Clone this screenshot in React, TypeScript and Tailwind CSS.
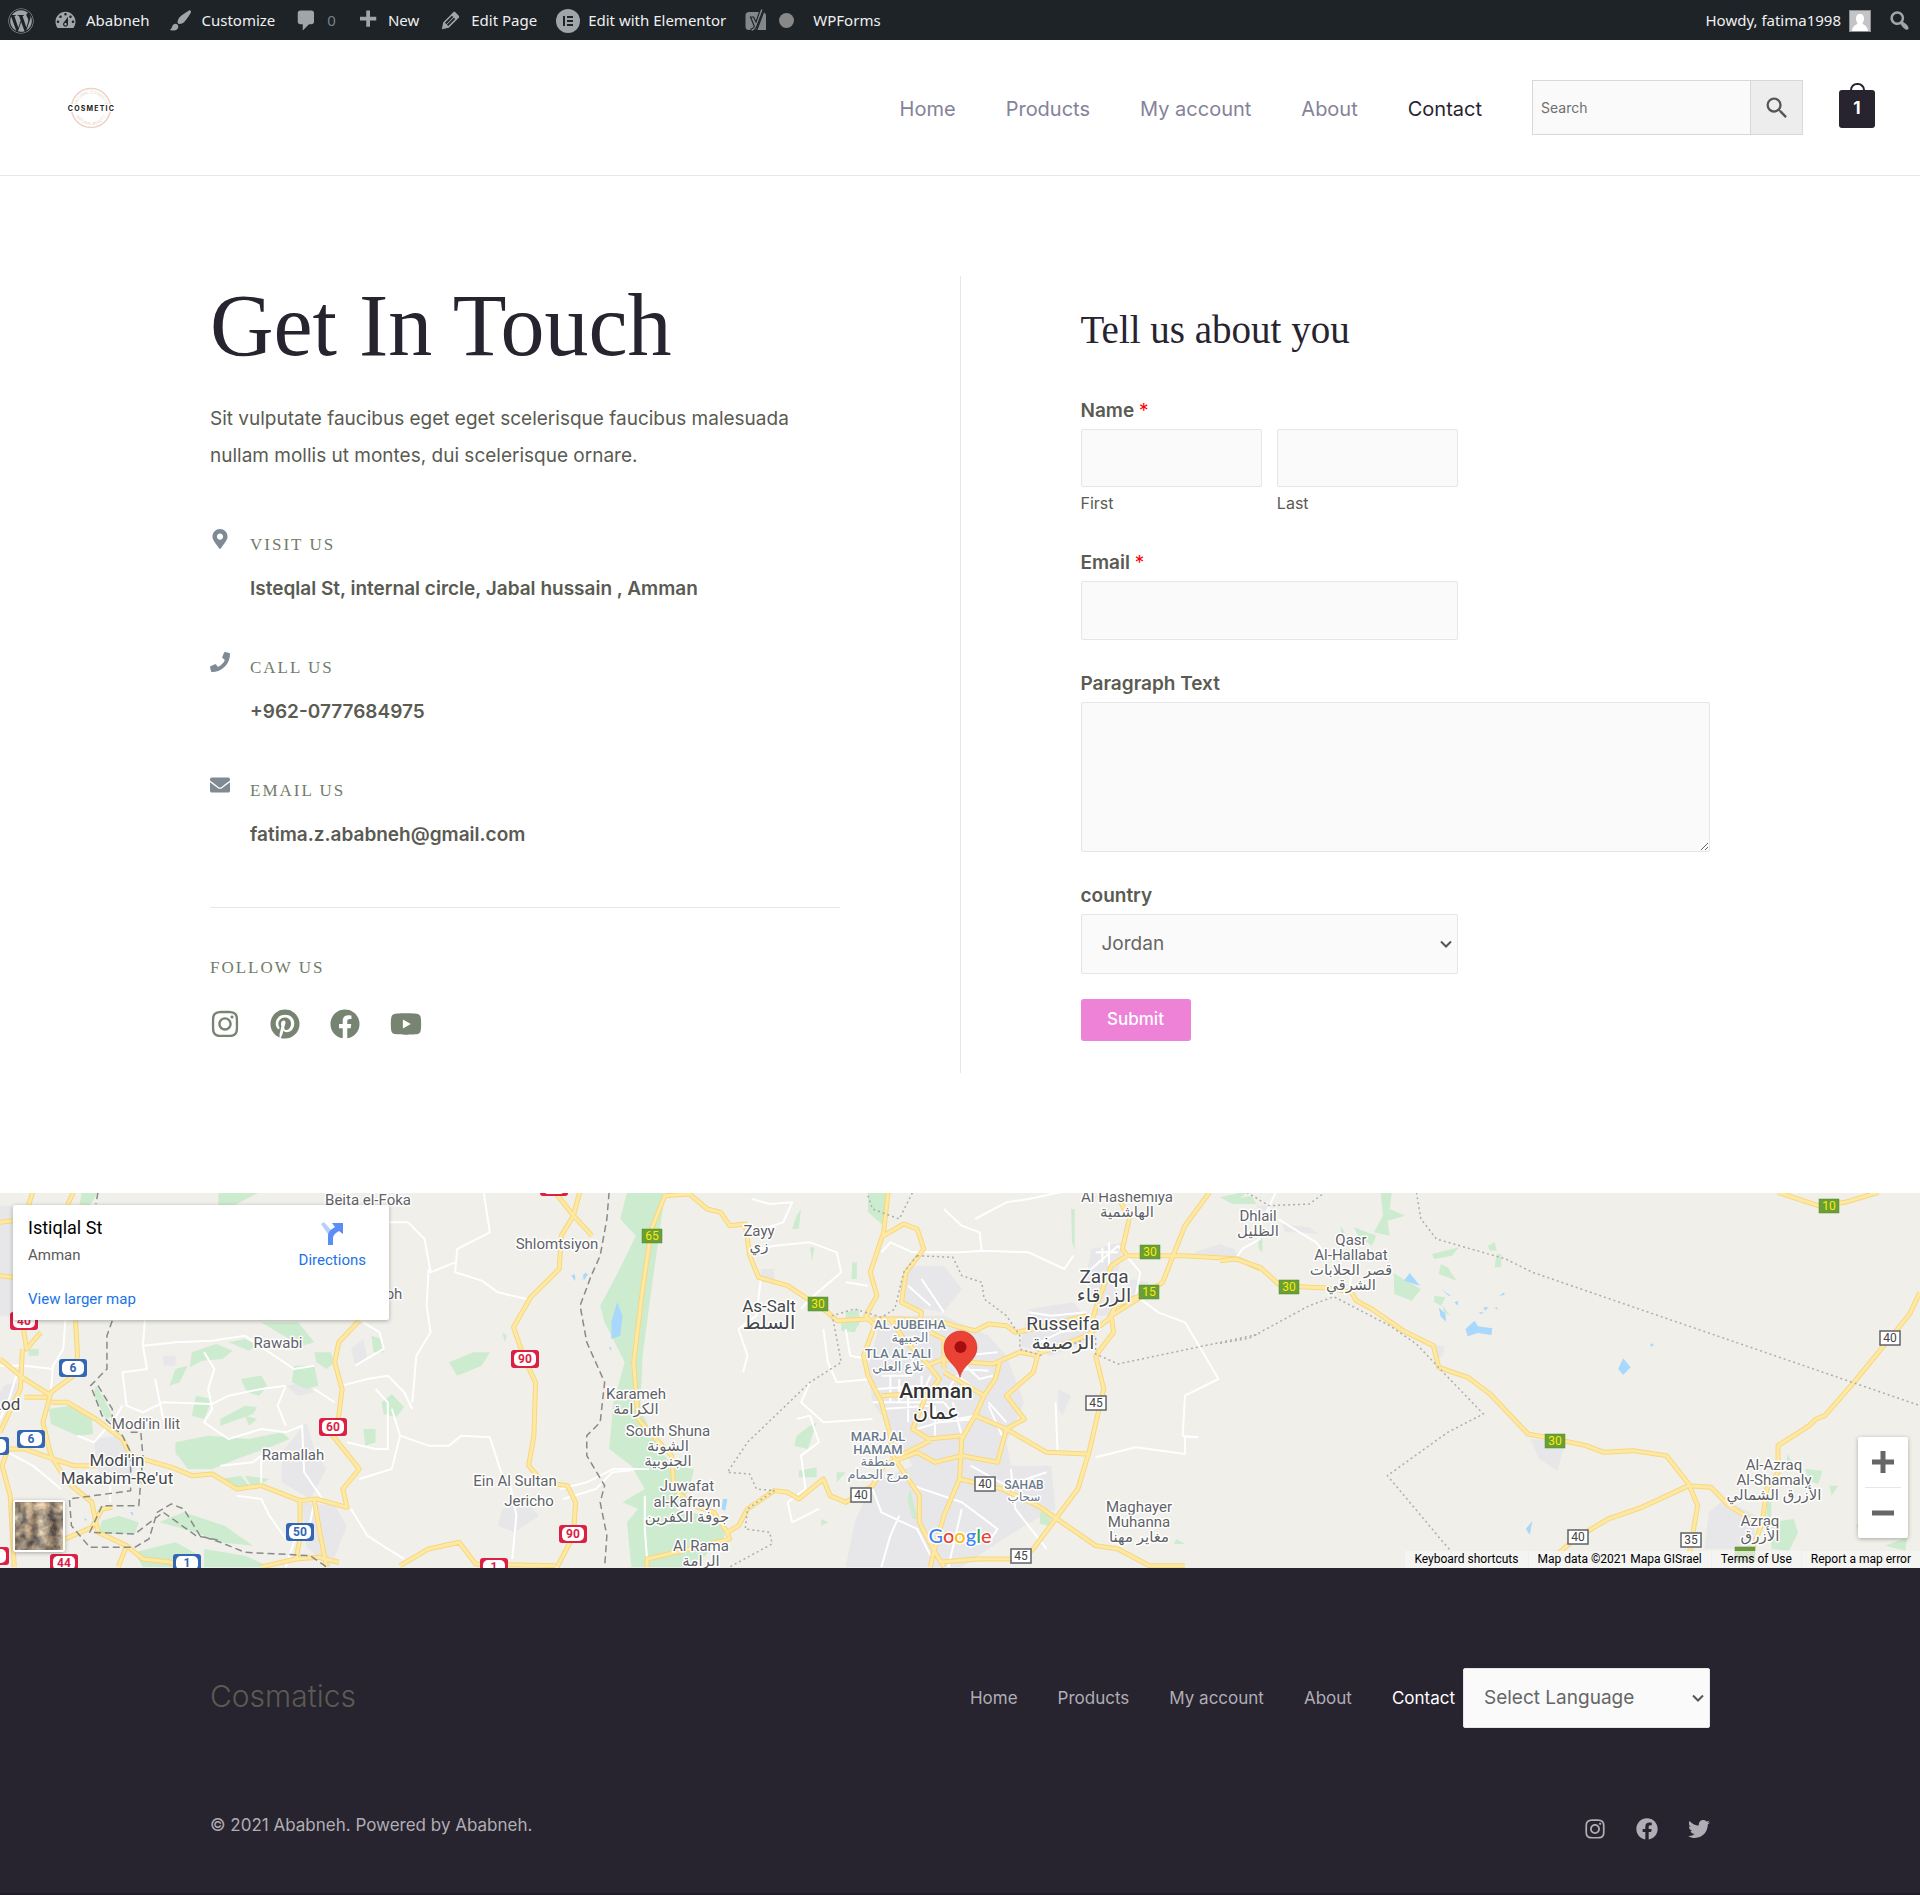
import React from "react";
import {
  FaEnvelope,
  FaFacebook,
  FaInstagram,
  FaMapMarkerAlt,
  FaPhone,
  FaPinterest,
  FaTwitter,
  FaWordpress,
  FaYoutube,
} from "react-icons/fa";

/* ---------- admin bar ---------- */

const glyphs = {
  dashboard:
    "M3.76 16h12.48c1.1-1.37 1.76-3.11 1.76-5 0-4.42-3.58-8-8-8s-8 3.58-8 8c0 1.89.66 3.63 1.76 5zM10 4c.55 0 1 .45 1 1s-.45 1-1 1-1-.45-1-1 .45-1 1-1zM6 6c.55 0 1 .45 1 1s-.45 1-1 1-1-.45-1-1 .45-1 1-1zm8 0c.55 0 1 .45 1 1s-.45 1-1 1-1-.45-1-1 .45-1 1-1zm-5.37 5.55L12 7v6c0 1.1-.9 2-2 2s-2-.9-2-2c0-.57.24-1.08.63-1.45zM4 10c.55 0 1 .45 1 1s-.45 1-1 1-1-.45-1-1 .45-1 1-1zm12 0c.55 0 1 .45 1 1s-.45 1-1 1-1-.45-1-1 .45-1 1-1zm-5 3c0-.55-.45-1-1-1s-1 .45-1 1 .45 1 1 1 1-.45 1-1z",
  brush:
    "M18.33 3.57s.27-.8-.31-1.36c-.53-.52-1.22-.24-1.22-.24-.61.3-5.76 3.47-7.67 5.57-.86.96-2.06 3.79-1.09 4.82.92.98 3.96-.17 4.79-1 2.06-2.06 5.21-7.17 5.5-7.79zM1.4 17.65c2.37-1.56 1.46-3.41 3.23-4.64.93-.65 2.22-.62 3.08.29.63.67.8 2.57-.16 3.46-1.57 1.45-4 1.55-6.15.89z",
  comment: "M5 2h9c1.1 0 2 .9 2 2v7c0 1.1-.9 2-2 2h-2l-5 5v-5H5c-1.1 0-2-.9-2-2V4c0-1.1.9-2 2-2z",
  plus: "M17 7v3h-5v5H9v-5H4V7h5V2h3v5h5z",
  pencil:
    "M13.89 3.39l2.71 2.72c.46.46.42 1.24.03 1.64l-8.01 8.02-5.56 1.16 1.16-5.58s7.6-7.63 7.99-8.03c.39-.39 1.22-.39 1.68.07zm-2.73 2.79l-5.59 5.61 1.11 1.11 5.54-5.65zm-2.97 8.23l5.58-5.6-1.07-1.08-5.59 5.6z",
  search:
    "M12.14 4.18c1.87 1.87 2.11 4.75.72 6.89.12.1.22.21.36.31.2.16.47.36.81.59.34.24.56.39.66.47.42.31.73.57.94.78.32.32.6.65.84 1 .25.35.44.69.59 1.04.14.35.21.68.18 1-.02.32-.14.59-.36.81s-.49.34-.81.36c-.31.02-.65-.04-.99-.19-.35-.14-.7-.34-1.04-.59-.35-.24-.68-.52-1-.84-.21-.21-.47-.52-.77-.93-.1-.13-.25-.35-.47-.66-.22-.32-.4-.57-.56-.78-.16-.2-.29-.35-.44-.5-2.07 1.09-4.69.76-6.44-.98-2.14-2.15-2.14-5.64 0-7.78 2.15-2.15 5.63-2.15 7.78 0zm-1.41 6.36c1.36-1.37 1.36-3.58 0-4.95-1.37-1.37-3.59-1.37-4.95 0-1.37 1.37-1.37 3.58 0 4.95 1.36 1.37 3.58 1.37 4.95 0z",
};

function Glyph({ name }: { name: keyof typeof glyphs }) {
  return (
    <svg viewBox="0 0 20 20" className="size-[25px] shrink-0 fill-[#a0a5aa]" aria-hidden="true">
      <path d={glyphs[name]} fillRule="evenodd" />
    </svg>
  );
}

function ElementorMark() {
  return (
    <svg viewBox="0 0 24 24" className="size-6" aria-hidden="true">
      <circle cx="12" cy="12" r="12" fill="#a0a5aa" />
      <path d="M7 7h2v10H7zM11 7h6v2h-6zM11 11h6v2h-6zM11 15h6v2h-6z" fill="#1d2327" />
    </svg>
  );
}

function YoastMark() {
  return (
    <svg viewBox="0 0 22 26" className="h-[26px] w-[22px]" aria-hidden="true">
      <path d="M4 4h13.500L11 22H4a3.500 3.500 0 0 1-3.500-3.500v-11A3.500 3.500 0 0 1 4 4zM19 4.500c1.300.5 2 1.600 2 3V22h-8.500z" fill="#82878c" />
      <path d="M5.500 9l3.500 8.500c.4 1.200 0 3-3 3.500v2.500c4-.2 5-2.500 6-5.500L18.500 1h-3L11 14 8.500 9z" fill="#82878c" stroke="#1d2327" strokeWidth="1.200" />
    </svg>
  );
}

function BarLink({ children, label }: { children: React.ReactNode; label?: string }) {
  return (
    <a href="#" aria-label={label} className="flex items-center gap-2">
      {children}
    </a>
  );
}

function AdminBar() {
  return (
    <div className="flex h-10 items-center justify-between bg-[#1d2327] px-2 pt-px font-['Noto_Sans'] text-[15px] text-[#f0f0f1]">
      <div className="flex items-center gap-[19px]">
        <BarLink label="About WordPress">
          <FaWordpress className="size-[26px] text-[#a0a5aa]" />
        </BarLink>
        <BarLink>
          <Glyph name="dashboard" />
          Ababneh
        </BarLink>
        <BarLink>
          <Glyph name="brush" />
          Customize
        </BarLink>
        <BarLink>
          <Glyph name="comment" />
          <span className="text-[#7b8085]">0</span>
        </BarLink>
        <BarLink>
          <Glyph name="plus" />
          New
        </BarLink>
        <BarLink>
          <Glyph name="pencil" />
          Edit Page
        </BarLink>
        <BarLink>
          <ElementorMark />
          Edit with Elementor
        </BarLink>
        <BarLink label="SEO">
          <YoastMark />
          <span className="ml-1 size-[15px] rounded-full bg-[#888888]" />
        </BarLink>
        <BarLink>WPForms</BarLink>
      </div>
      <div className="flex items-center gap-4">
        <BarLink>
          Howdy, fatima1998
          <svg viewBox="0 0 22 22" className="size-[22px]" aria-hidden="true">
            <rect width="22" height="22" fill="#8c8f94" />
            <rect x="1" y="1" width="20" height="20" fill="#c4c4c4" />
            <path d="M11 4c3 0 4 2 4 5 0 2-1 3-1.500 4 0 2 5 2 5.500 8H3c.5-6 5.500-6 5.500-8C8 12 7 11 7 9c0-3 1-5 4-5z" fill="#fff" />
          </svg>
        </BarLink>
        <button type="button" aria-label="Search admin">
          <Glyph name="search" />
        </button>
      </div>
    </div>
  );
}

/* ---------- header ---------- */

const pages = ["Home", "Products", "My account", "About", "Contact"];

function Logo() {
  return (
    <svg viewBox="0 0 60 44" className="h-[44px] w-[60px]" role="img" aria-label="Cosmetic">
      <defs>
        <path id="arc-top" d="M15.500 22a14.500 14.500 0 0 1 29 0" />
        <path id="arc-bottom" d="M13 22a17 17 0 0 0 34 0" />
      </defs>
      <circle cx="30" cy="22" r="19.500" fill="none" stroke="#f0cfc8" strokeWidth="1.500" />
      <g fontFamily="Inter, sans-serif" fill="#d9d8b8">
        <text fontSize="4" textAnchor="middle">
          <textPath href="#arc-top" startOffset="50%">NATURAL COSMETIC</textPath>
        </text>
        <text fontSize="4" textAnchor="middle">
          <textPath href="#arc-bottom" startOffset="50%">NATURAL BEAUTY</textPath>
        </text>
      </g>
      <rect x="6" y="18" width="48" height="8" fill="#fff" />
      <text x="30.500" y="24.500" fontFamily="Inter, sans-serif" fontSize="7" fontWeight="700" letterSpacing="1.200" textAnchor="middle" fill="#222">
        COSMETIC
      </text>
    </svg>
  );
}

function Header() {
  return (
    <header className="flex h-[136px] items-center justify-between border-b border-[#e6e6e6] pr-[45px] pl-[61px]">
      <a href="#">
        <Logo />
      </a>
      <div className="flex items-center">
        <nav className="flex items-center gap-[50px] pt-[3px] text-[20px]">
          {pages.map((p) => (
            <a key={p} href="#" className={p === "Contact" ? "text-[#27232f]" : "text-[#84829a]"}>
              {p}
            </a>
          ))}
        </nav>
        <form className="ml-[50px] flex h-[55px] w-[271px] border border-[#d8d8d8] bg-[#fafafa]">
          <input
            type="search"
            aria-label="Search"
            placeholder="Search"
            className="min-w-0 flex-1 px-2 text-[14px] outline-none placeholder:text-[#6f6f6f]"
          />
          <button type="button" aria-label="Submit search" className="flex w-[52px] items-center justify-center border-l border-[#d8d8d8] bg-[#ededed]">
            <svg viewBox="0 0 24 24" className="size-7 fill-[#555555]" aria-hidden="true">
              <path d="M15.500 14h-.790l-.280-.270A6.471 6.471 0 0 0 16 9.500 6.500 6.500 0 1 0 9.500 16c1.610 0 3.090-.590 4.230-1.570l.270.280v.790l5 4.990L20.490 19l-4.990-5zm-6 0C7.010 14 5 11.990 5 9.500S7.010 5 9.500 5 14 7.010 14 9.500 11.990 14 9.500 14z" />
            </svg>
          </button>
        </form>
        <a href="#" aria-label="Cart, 1 item" className="mb-1 ml-9 flex flex-col items-center">
          <span className="h-[7px] w-[15px] rounded-t-full border-2 border-b-0 border-[#27232f]" />
          <span className="flex h-[38px] w-9 items-center justify-center rounded-[3px] bg-[#27232f] text-[17px] font-bold text-white">1</span>
        </a>
      </div>
    </header>
  );
}

/* ---------- contact ---------- */

const contacts = [
  { icon: FaMapMarkerAlt, title: "VISIT US", text: "Isteqlal St, internal circle, Jabal hussain , Amman" },
  { icon: FaPhone, title: "CALL US", text: "+962-0777684975" },
  { icon: FaEnvelope, title: "EMAIL US", text: "fatima.z.ababneh@gmail.com" },
];

function ContactDetails() {
  return (
    <div className="flex-1 border-r border-[#e6e6e6] pr-[120px] pb-[33px]">
      <h1 className="font-['Liberation_Serif'] text-[88px] leading-[100px] text-[#27232f]">Get In Touch</h1>
      <p className="mt-6 text-[19px] leading-[37px]">
        Sit vulputate faucibus eget eget scelerisque faucibus malesuada nullam mollis ut montes, dui scelerisque ornare.
      </p>
      <ul className="mt-[50px]">
        {contacts.map(({ icon: Icon, title, text }) => (
          <li key={title} className="flex h-[123px] gap-5">
            <Icon className="mt-[5px] size-5 text-[#7f8a94]" />
            <div>
              <h2 className="mt-[5px] font-['Liberation_Serif'] text-[17px] leading-8 tracking-[2px] text-[#727c6a]">{title}</h2>
              <p className="mt-3 text-[19px] leading-8 font-semibold">{text}</p>
            </div>
          </li>
        ))}
      </ul>
      <div className="mt-[14px] border-t border-[#e6e6e6] pt-11">
        <h2 className="font-['Liberation_Serif'] text-[17px] leading-8 tracking-[2px] text-[#727c6a]">FOLLOW US</h2>
        <div className="mt-6 flex items-center gap-[30px] text-[#788472]">
          <a href="#" aria-label="Instagram"><FaInstagram className="size-[30px]" /></a>
          <a href="#" aria-label="Pinterest"><FaPinterest className="size-[30px]" /></a>
          <a href="#" aria-label="Facebook"><FaFacebook className="size-[30px]" /></a>
          <a href="#" aria-label="YouTube"><FaYoutube className="size-8" /></a>
        </div>
      </div>
    </div>
  );
}

const field = "rounded-[2px] border border-[#e6e6e6] bg-[#fafafa] text-[19px] text-[#666666] outline-none";
const label = "block text-[19px] leading-9 font-semibold";

function SelectBox({ id, name, option, className }: { id?: string; name?: string; option: string; className: string }) {
  return (
    <div className={`relative ${className}`}>
      <select id={id} aria-label={name} className={`${field} block h-[60px] w-full appearance-none pr-8 pl-5`}>
        <option>{option}</option>
      </select>
      <svg viewBox="0 0 12 12" className="pointer-events-none absolute top-6 right-1.5 size-3" aria-hidden="true">
        <path d="M1 3.500l5 5 5-5" fill="none" stroke="#555555" strokeWidth="2" />
      </svg>
    </div>
  );
}

function ContactForm() {
  return (
    <div className="flex-1 pl-[120px]">
      <h2 className="mt-8 font-['Liberation_Serif'] text-[39px] leading-[44px] text-[#27232f]">Tell us about you</h2>
      <form className="mt-[41px]">
        <fieldset>
          <legend className={label}>
            Name <span className="font-normal text-[#ff0000]">*</span>
          </legend>
          <div className="grid w-3/5 grid-cols-2 gap-[15px]">
            <div>
              <input id="first" type="text" className={`${field} block h-[58px] w-full px-5`} />
              <label htmlFor="first" className="block text-[16px] leading-8">First</label>
            </div>
            <div>
              <input id="last" type="text" className={`${field} block h-[58px] w-full px-5`} />
              <label htmlFor="last" className="block text-[16px] leading-8">Last</label>
            </div>
          </div>
        </fieldset>
        <div className="mt-[26px]">
          <label htmlFor="email" className={label}>
            Email <span className="font-normal text-[#ff0000]">*</span>
          </label>
          <input id="email" type="email" className={`${field} block h-[59px] w-3/5 px-5`} />
        </div>
        <div className="mt-[26px]">
          <label htmlFor="message" className={label}>Paragraph Text</label>
          <textarea id="message" className={`${field} block h-[150px] w-full px-5`} />
        </div>
        <div className="mt-[26px]">
          <label htmlFor="country" className={label}>country</label>
          <SelectBox id="country" option="Jordan" className="w-3/5" />
        </div>
        <button type="button" className="mt-[25px] h-[42px] w-[110px] rounded-[3px] bg-[#ed82d7] text-[17px] font-medium text-white">
          Submit
        </button>
      </form>
    </div>
  );
}

/* ---------- map ---------- */

const west = {
  greens:
    "M120 660L170 650 225 690 228 735 190 740 125 705ZM250 995L290 980 340 1000 330 1035 240 1035ZM470 490l60-25 40 20-25 25-50 5-30 20zM540 690l60-40 30 5-10 20-80 35zM430 760l80-20 100 10 80-20 20 20-40 20-90 40-60 30-60 0-30-50zM720 530l50 0 10 60-30 10-35-20zM770 490l40 0 10 30-20 20-25-20zM640 400l90 0 40 60-30 10-60-40zM910 440l25 10 5 40-25 0zM935 640l25-25 30 40-20 30-30-10zM890 720l30 0 0 40-25 10zM590 570l50-10 15 30-20 30-30-10zM1100 520l60-30 40 0-20 40-60 30zM390 1000l60-30 100 40 70 60-80-10-60-30zM330 1090l100-30 60 40-20 34-120 0zM535 10h100l-60 38h-40zM600 860l60 10-40 30zM480 620l40 10-20 60-30-10zM70 480l25 0 0 20-25 0zM200 10h40l-20 38h-25zM235 590l20 40 20 50-15 10-30-70zM560 460l40-10 30 20-20 15zM430 540l30-10-20 50-25 10zM600 680l30 10-20 20zM540 870l50-10 20 30-40 10zM1230 430l12 10-5 20zM500 1080l100 20 60 34H500z",
  urban:
    "M690 790l60-90 20 80 30 60-40 90-70-50zM230 750l60-10 50 80-30 60-70-30zM0 50h30v330H0zM740 940l80 10 30 60-40 124-60-60zM1230 960l60-20 30 40-60 50-40-20zM10 590l30-10 10 50-50 30v-50zM430 760l30 0 0 40-30 0zM860 480l30-30 10 60-30 20zM400 500l30 0 0 30-30 0zM700 590l50-10 20 30-40 10z",
  white:
    "M355 395L350 470 360 540 300 550 310 650 350 670 400 640 520 645 560 620 640 600 700 590M350 470L430 460 520 455 600 440 660 490 720 540 770 530M500 490L525 540 510 600 520 660 500 700 560 750 640 720 700 730 740 710 745 850 790 930M300 650L280 690 230 760 190 740M700 590L680 650 700 710M770 600L820 640M838 590L900 570 950 560 990 610 1010 660M1050 240L1045 350 1055 430 1020 500 1010 640M950 100L1000 100 1040 150 1055 250 1115 220M1185 10L1200 130 1120 180 1115 250 1180 275 1220 310 1290 330M960 660L980 740 1050 770 1100 770 1130 740 1200 745 1225 840 1240 890M880 870L960 840 980 740M580 920L640 930 660 980 700 1050M20 790L80 830 150 900M1250 890L1265 980 1255 1110M1380 930L1460 900 1500 850 1568 840M860 960L900 1040 950 1080 990 1110M540 830L620 820 640 800M160 395L155 480 130 530 125 600M700 1134L720 1060 760 1000 770 940M640 800V890M850 760L920 780 950 780 950 640 920 600M0 530H60L130 540M270 850V940M380 570L400 690 440 720M40 560L20 640 0 690M890 400L930 430 940 480 870 530",
  yellow:
    "M185 395L190 500 180 560 125 610 105 700 125 800 165 880 225 940 240 1030 310 1070 350 1110 420 1120 430 1134M0 510L60 570 125 620M125 640L165 640 235 690 300 750 320 800 420 835 470 860 520 855 580 900 640 890 735 935 775 930 850 955 840 900 880 840 815 740 830 680 838 600 820 520 830 460 880 395M0 780L60 780 130 810 180 830 240 830M20 780L5 830 25 920 35 1134M735 935V1050L725 1110 780 1105 830 1120M770 935L785 1040 800 1134M100 430L65 480 55 400M55 480L50 600 0 730M60 625H115M1360 10L1405 80 1375 140 1370 240 1300 325 1258 415 1285 510 1312 580 1308 740 1295 830 1330 880 1390 890 1410 940 1405 1040 1365 1134M1420 10L1405 80 1450 140M980 1130L1050 1080 1125 1060 1165 1125 1360 1130M160 1050L225 1015 250 960 275 955M180 10L165 48M80 10L70 48M0 260L32 265M0 100L32 95M310 1070L290 1134M640 1134L725 1110",
  border:
    "M240 10L235 45M275 395L262 440V540L222 590 250 680 300 740 320 790V905L170 930 175 1010 220 1075 330 1075 365 1050 385 970 420 945 450 960 490 1040 540 1060 600 1090 760 1100 800 1134M240 590L275 660V700M320 730H345L350 800 340 950H250L220 1030 330 1035 400 970 480 1040 540 1055",
  water: "M1510 340L1522 380 1525 430 1508 450 1495 430 1505 390ZM1400 260l8-5 0 20zM1430 255l8-5-12 25zM318 970l8 0 0 12zM205 988l8 2-3 6zM1492 475l5 0 0 12z",
};

const centre = {
  greens:
    "M150 10L235 10 225 110 205 300 185 500 180 660 215 760 250 830 300 840 290 900 260 960 360 990 370 1040 300 1134 160 1134 150 1000 175 960 140 940 190 900 160 830 110 780 120 640 145 520 100 400 90 350 130 250 170 140 135 90ZM690 10L735 10 725 110 690 70ZM640 370l30-10 0 50-30 10zM530 740l30-30 15-10-20 80-30-10zM535 845l40-10 0 30-40 0zM630 400l40 0-10 30-30-5zM1075 970l30 0-10 40-20-5zM585 990l15 10-15 10zM530 80l10-20-5 60-15 0zM1145 60l8 0 0 120-6-20zM560 175l10 0-5 40zM655 220l10 0 0 50-12 0zM785 900l10 60 10 30-15 0-12-60zM1490 35l60-15 10 25-50 0zM1380 1050l20 15-25 0zM620 850l20 0-20 30z",
  urban:
    "M790 230L860 230 900 300 860 370 770 350 760 290ZM720 380L860 380 960 440 1000 500 1040 640 1000 760 1010 830 1100 830 1110 960 1040 1010 960 1080 900 1134 640 1134 660 1000 700 880 790 830 760 760 700 640 690 540ZM1050 360L1150 340 1180 390 1200 450 1100 500 1030 470ZM1190 180L1260 160 1250 260 1240 380 1200 380 1180 260ZM1280 270l40 10-30 50-30-10zM1420 190l60-25 40 30-20 15-60-10zM1115 600l30 20-20 60-10-20zM290 990l50-10 20 50-30 10zM450 240h30v40h-30z",
  white:
    "M430 30L470 45 520 40 500 100 430 130M450 270L440 380 400 420 420 500 410 550M540 360L560 330 630 250 620 190 560 160 480 170 420 190M640 280L690 290M720 190L740 160 790 190 900 190 945 185 1050 190 1130 240 1150 200M860 60L900 110 940 130 945 190M930 90L1000 40 1050 30 1120 10M1250 170L1300 250 1290 320 1340 370 1400 400 1440 490 1475 570 1400 620 1395 740 1430 745M1400 740V795L1290 775 1200 805M1110 640L1115 800M560 580L540 640 590 700 700 690M590 420L600 520 620 580 700 570M640 420L650 500 690 510M530 690L560 680 580 760 540 800 550 900 510 940 520 1000 580 960M190 920V1020L195 1110M0 900L60 880 120 840 200 840M700 900L720 970 800 1020 830 1100M790 890L900 940 980 1020 960 1060M900 960L870 1134M920 830L1000 890 1090 850M720 1134L740 1040 760 980M1010 840L1020 960 1090 1080M720 560H790M710 600L820 590 830 560M700 640H860M720 660L830 650 850 700M870 470L900 500 980 490M880 640L900 740M840 650V740M860 640L890 690 930 680M800 720L850 700 930 690M900 520L940 570 970 560M900 540L960 545M870 600L890 560 930 600M960 640L1000 700M960 650L990 740M780 290L830 350M810 270L840 330 860 370M780 620V700M740 560V640M760 570V640M810 560V640M830 600L900 610M1050 370L1100 380 1180 370M1060 470L1120 430 1170 420M1200 190H1250M1215 175V220M1190 240L1250 170M1230 160V230",
  yellow:
    "M235 20L290 15 330 60 360 70 380 110 415 105 425 200 445 265 510 290 555 330 600 370 620 395 690 390M235 20L205 120 185 300 165 520 175 690 215 750 250 800 255 900 300 950 345 970 375 1030 400 1010 420 960 480 905 510 910 535 930 590 870 605 920 640 940 700 890 730 820M375 1030L380 1050 260 1090 195 1110V1134M735 10L725 130 695 250 710 320 685 380 705 410 680 500 690 560 720 640 740 740 745 800 790 890 805 920 805 1000 840 1090 860 1134M725 140L770 105 800 120 815 180 775 250 765 340 810 370 805 400M700 390L760 390 860 400 895 415 930 425 960 405 1000 410 1020 430 1060 420 1180 380M740 390L770 450 820 520 850 570 820 620 790 720 825 750 900 740M830 430L860 450V540M740 820L800 790 840 820 900 800 980 820 1000 720M760 800L830 755M860 550L950 620 930 680 900 750 895 870 860 980 835 1100 830 1134M820 530L860 510 920 520 970 525 1030 490 1070 500 1060 550 1000 620 1040 690 1000 720 930 680M1070 495L1180 440 1230 390 1245 350 1300 320M1000 720L1090 790 1180 795M1245 10L1275 90 1260 180 1270 200 1235 230 1210 320 1190 400M1455 10L1400 110 1350 280 1300 325 1235 380 1240 430 1200 500 1218 600 1185 790 1160 900 1060 1080 1035 1110 935 1110 850 1120M1270 200L1400 200 1520 210 1568 240M895 870L990 900 1070 950 1200 1070 1250 1080 1320 1130 1400 1130M950 620L975 570 985 520M720 620L780 615M740 820L700 830",
  border:
    "M110 10L105 90 90 200 70 260 45 350 60 460 100 580 90 700 60 740 60 800 100 890 90 940 105 1040 100 1134",
  dotted:
    "M690 20L700 60 760 90 790 10M800 200L880 205 900 260 945 280 950 330 1000 380 1030 440 1030 480 1080 500M1100 490L1200 440 1200 495 1250 525 1568 435M800 200L770 250 750 360 720 385 660 360 610 380 630 520 560 580 490 670 420 760 375 850 425 855 440 900 480 905 420 960 415 1020 470 1030 475 1065 380 1134",
  water: "M128 340L140 380 135 440 115 450 115 400ZM365 930L375 930 370 965 362 960ZM28 260l6 0 0 15zM55 255l8 0-10 20z",
};

const east = {
  greens:
    "M360 10L385 10 380 60 415 80 375 95 380 140 345 130 365 80ZM365 180L385 250 450 300 430 335 390 315 390 260ZM475 195l60-20-15 25-40 10zM495 225l15 10 20 40-40-20zM600 170l15-10 5 25-15 0zM620 195l10 0 0 40-15 0zM480 320l25 5-10 25-15-10zM500 350l15 30-15-10zM1310 840l40 5-10 40-20-10zM1365 890l20 0-15 30zM1235 1000l50-10 10 40-20 55-40-5zM1225 930l10 10 0 40-10 30zM1425 1005l15 5-10 20zM1490 1070l50-25-5 40zM0 25l50-15 10 0-30 35zM85 150l10 0 0 40-8-10zM270 110l10 20-8 5zM300 115l50 25-10 30-30-30zM1270 795l10 20-10 10z",
  urban: "M1085 1080L1095 970 1130 930 1200 980 1195 1080ZM695 750L775 760 755 845 715 810ZM480 470L503 470 500 500 485 510ZM140 105l60 10 20 20-40-5-35 0zM0 170l35 10-10 25H0zM80 50l30 0 0 30z",
  white: "M130 90L215 160 240 200M125 10L90 110M90 150L50 180 35 210M295 240L290 310",
  yellow:
    "M0 215L35 210 90 235 135 290 240 297 295 310 305 335 340 360 410 425 478 470 490 535 555 565 605 615 690 735 750 750 820 770 860 790 925 785 1000 800 1050 885 1070 950 1052 1090M760 1090L800 1045 870 990 945 955 1050 890 1100 895 1140 950 1200 1000M1568 310L1545 375 1420 580 1355 680 1335 690 1320 710 1250 770V850L1225 900 1215 1000 1190 1090M1250 10L1340 50 1400 40 1475 10",
  dotted:
    "M440 10L450 90 485 150 640 210 700 250 1568 650M0 463L65 448 200 350 255 323 380 410 440 465 500 550 590 675 510 730 375 860 500 1060 520 1090M60 10L110 50 200 45 235 10",
  water:
    "M550 420L570 395 578 412 610 418 608 438 578 432 555 442ZM903 508L920 535 903 558 892 540ZM425 252L448 290 412 275ZM490 355L505 375 506 398 494 382ZM685 1020L700 995 694 1037ZM963 468l5-5 4 5-5 5zM495 300l22 20-5 0zM525 340l8-5 0 15zM590 355l12 0-8 10zM615 355l6 0 0 8zM580 370l12 0-8 6zM625 320l12-10 0 8z",
};

const regions = [
  { key: "west", transform: "translate(0 -4) scale(.4082 .3333)", art: west },
  { key: "centre", transform: "translate(560 -4) scale(.4464 .3333)", art: centre },
  { key: "east", transform: "translate(1220 -4) scale(.4464 .3333)", art: east },
];

type Line = { width: number; color: string; dash?: string };

function Strokes({ d, width, color, dash }: { d?: string } & Line) {
  if (!d) return null;
  return (
    <path
      d={d}
      fill="none"
      stroke={color}
      strokeWidth={width}
      strokeDasharray={dash}
      strokeLinejoin="round"
      vectorEffect="non-scaling-stroke"
    />
  );
}

type Place = { x: number; y: number; t: string; s?: number; k?: "city" | "capital" | "district" };

const places: Place[] = [
  { x: 368, y: 7, t: "Beita el-Foka" },
  { x: 557, y: 51, t: "Shlomtsiyon" },
  { x: 394, y: 101, t: "ph" },
  { x: 278, y: 150, t: "Rawabi" },
  { x: 6, y: 211, t: "Lod", k: "city" },
  { x: 146, y: 231, t: "Modi'in Ilit" },
  { x: 293, y: 262, t: "Ramallah" },
  { x: 117, y: 267, t: "Modi'in", k: "city" },
  { x: 117, y: 285, t: "Makabim-Re'ut", k: "city" },
  { x: 515, y: 288, t: "Ein Al Sultan" },
  { x: 529, y: 308, t: "Jericho" },
  { x: 636, y: 201, t: "Karameh" },
  { x: 636, y: 216, t: "الكرامة" },
  { x: 668, y: 238, t: "South Shuna" },
  { x: 668, y: 253, t: "الشونة" },
  { x: 668, y: 268, t: "الجنوبية" },
  { x: 687, y: 293, t: "Juwafat" },
  { x: 687, y: 309, t: "al-Kafrayn" },
  { x: 687, y: 324, t: "جوفة الكفرين" },
  { x: 701, y: 353, t: "Al Rama" },
  { x: 701, y: 368, t: "الرامة" },
  { x: 759, y: 38, t: "Zayy" },
  { x: 759, y: 53, t: "زي" },
  { x: 769, y: 113, t: "As-Salt", k: "city" },
  { x: 769, y: 130, t: "السلط", k: "city", s: 19 },
  { x: 910, y: 132, t: "AL JUBEIHA", k: "district" },
  { x: 910, y: 145, t: "الجبيهة", k: "district" },
  { x: 898, y: 161, t: "TLA AL-ALI", k: "district" },
  { x: 898, y: 174, t: "تلاع العلي", k: "district" },
  { x: 936, y: 198, t: "Amman", k: "capital" },
  { x: 936, y: 219, t: "عمان", k: "capital" },
  { x: 878, y: 244, t: "MARJ AL", k: "district" },
  { x: 878, y: 257, t: "HAMAM", k: "district" },
  { x: 878, y: 269, t: "منطقة", k: "district" },
  { x: 878, y: 282, t: "مرج الحمام", k: "district" },
  { x: 1024, y: 292, t: "SAHAB", k: "district", s: 12 },
  { x: 1024, y: 304, t: "سحاب", k: "district", s: 12 },
  { x: 1139, y: 314, t: "Maghayer" },
  { x: 1139, y: 329, t: "Muhanna" },
  { x: 1139, y: 344, t: "مغاير مهنا" },
  { x: 1104, y: 84, t: "Zarqa", k: "city", s: 19 },
  { x: 1104, y: 103, t: "الزرقاء", k: "city", s: 19 },
  { x: 1063, y: 131, t: "Russeifa", k: "city", s: 19 },
  { x: 1063, y: 150, t: "الرصيفة", k: "city", s: 19 },
  { x: 1127, y: 4, t: "Al Hashemiya" },
  { x: 1127, y: 19, t: "الهاشمية" },
  { x: 1258, y: 23, t: "Dhlail" },
  { x: 1258, y: 38, t: "الظليل" },
  { x: 1351, y: 47, t: "Qasr" },
  { x: 1351, y: 62, t: "Al-Hallabat" },
  { x: 1351, y: 77, t: "قصر الحلابات" },
  { x: 1351, y: 92, t: "الشرقي" },
  { x: 1774, y: 272, t: "Al-Azraq" },
  { x: 1774, y: 287, t: "Al-Shamaly" },
  { x: 1774, y: 302, t: "الأزرق الشمالي" },
  { x: 1760, y: 328, t: "Azraq" },
  { x: 1760, y: 343, t: "الأزرق" },
];

type Shield = { x: number; y: number; n: string; c: "blue" | "red" | "green" | "plain" };

const shields: Shield[] = [
  { x: 73, y: 175, n: "6", c: "blue" },
  { x: 31, y: 246, n: "6", c: "blue" },
  { x: -5, y: 253, n: "1", c: "blue" },
  { x: 300, y: 339, n: "50", c: "blue" },
  { x: 187, y: 370, n: "1", c: "blue" },
  { x: 24, y: 128, n: "40", c: "red" },
  { x: 333, y: 234, n: "60", c: "red" },
  { x: 525, y: 166, n: "90", c: "red" },
  { x: 573, y: 341, n: "90", c: "red" },
  { x: 64, y: 370, n: "44", c: "red" },
  { x: 494, y: 374, n: "1", c: "red" },
  { x: -5, y: 363, n: "", c: "red" },
  { x: 554, y: -6, n: "", c: "red" },
  { x: 652, y: 43, n: "65", c: "green" },
  { x: 818, y: 111, n: "30", c: "green" },
  { x: 1150, y: 59, n: "30", c: "green" },
  { x: 1149, y: 99, n: "15", c: "green" },
  { x: 1289, y: 94, n: "30", c: "green" },
  { x: 1555, y: 248, n: "30", c: "green" },
  { x: 1829, y: 13, n: "10", c: "green" },
  { x: 1745, y: 361, n: "", c: "green" },
  { x: 985, y: 291, n: "40", c: "plain" },
  { x: 861, y: 302, n: "40", c: "plain" },
  { x: 1096, y: 210, n: "45", c: "plain" },
  { x: 1021, y: 363, n: "45", c: "plain" },
  { x: 1890, y: 145, n: "40", c: "plain" },
  { x: 1578, y: 344, n: "40", c: "plain" },
  { x: 1691, y: 347, n: "35", c: "plain" },
];

function RoadShield({ x, y, n, c }: Shield) {
  if (c === "green" || c === "plain") {
    const green = c === "green";
    return (
      <g>
        <rect x={x - 10} y={y - 7} width="20" height="14" fill={green ? "#689f38" : "#fff"} stroke={green ? "#558b2f" : "#5f6368"} strokeWidth={green ? 0.5 : 1.5} />
        {n && (
          <text x={x} y={y + 4} fontSize="12" textAnchor="middle" fill={green ? "#ffea00" : "#444"}>
            {n}
          </text>
        )}
      </g>
    );
  }
  const color = c === "blue" ? "#3367b5" : "#dc1f45";
  return (
    <g>
      <rect x={x - 14} y={y - 9} width="28" height="18" rx="3" fill={color} />
      <rect x={x - 11} y={y - 7} width="22" height="14" rx="5" fill="#fff" />
      {n && (
        <text x={x} y={y + 4} fontSize="12" fontWeight="700" textAnchor="middle" fill={color}>
          {n}
        </text>
      )}
    </g>
  );
}

const placeStyle = {
  town: { size: 15, fill: "#5f6368", weight: 400 },
  city: { size: 17, fill: "#45484c", weight: 400 },
  capital: { size: 21, fill: "#333333", weight: 500 },
  district: { size: 13, fill: "#6b7a8a", weight: 500 },
};

function MapArt() {
  return (
    <svg
      viewBox="0 0 1920 375"
      preserveAspectRatio="xMidYMid slice"
      className="absolute inset-0 size-full"
      fontFamily="Roboto, 'DejaVu Sans', sans-serif"
      role="img"
      aria-label="Map of Amman and its surroundings"
    >
      <rect width="1920" height="375" fill="#f0efea" />
      {regions.map(({ key, transform, art }) => (
        <g key={key} transform={transform}>
          <path d={art.urban} fill="#e7e7e9" />
          <path d={art.greens} fill="#cdebcf" />
          <path d={art.water} fill="#a8d8fd" />
          <Strokes d={art.white} width={2} color="#ffffff" />
        </g>
      ))}
      {regions.map(({ key, transform, art }) => (
        <g key={key} transform={transform}>
          <Strokes d={art.yellow} width={5} color="#f7d77d" />
          <Strokes d={art.yellow} width={3} color="#fee9a4" />
          <Strokes d={"border" in art ? art.border : undefined} width={1.5} color="#8a8a8a" dash="7 4" />
          <Strokes d={"dotted" in art ? art.dotted : undefined} width={1.5} color="#adadad" dash="2 3" />
        </g>
      ))}
      {shields.map((s) => (
        <RoadShield key={`${s.x}-${s.y}`} {...s} />
      ))}
      {places.map(({ x, y, t, s, k }) => {
        const p = placeStyle[k ?? "town"];
        const size = s ?? p.size;
        return (
          <text
            key={`${x}-${y}`}
            x={x}
            y={y + Math.round(size / 3)}
            fontSize={size}
            fontWeight={p.weight}
            textAnchor="middle"
            fill={p.fill}
            stroke="#ffffff"
            strokeWidth="3"
            strokeLinejoin="round"
            paintOrder="stroke"
          >
            {t}
          </text>
        );
      })}
      <path d="M960 184.500C958 172 944 168 944 154.500a16.500 16.500 0 0 1 33 0C977 168 962 172 960 184.500z" fill="#ea4335" stroke="#c5221f" strokeWidth=".5" />
      <circle cx="960.500" cy="154" r="6" fill="#a50e0e" />
      <text x="960" y="350" fontFamily="Lato, sans-serif" fontSize="20" fontWeight="500" textAnchor="middle" stroke="#fff" strokeWidth="3" paintOrder="stroke">
        <tspan fill="#4285f4">G</tspan>
        <tspan fill="#ea4335">o</tspan>
        <tspan fill="#fbbc04">o</tspan>
        <tspan fill="#4285f4">g</tspan>
        <tspan fill="#34a853">l</tspan>
        <tspan fill="#ea4335">e</tspan>
      </text>
    </svg>
  );
}

function SatelliteThumb() {
  return (
    <svg viewBox="0 0 48 48" className="size-full" aria-hidden="true">
      <defs>
        <filter id="terrain" x="0" y="0" width="100%" height="100%" colorInterpolationFilters="sRGB">
          <feTurbulence type="fractalNoise" baseFrequency=".09" numOctaves="4" seed="6" />
          <feColorMatrix values="1 0 0 0 .1  .9 .1 0 0 .04  .7 .2 0 0 .02  0 0 0 0 1" />
        </filter>
      </defs>
      <rect width="48" height="48" fill="#9b8874" />
      <rect width="48" height="48" filter="url(#terrain)" />
    </svg>
  );
}

function MapSection() {
  return (
    <section className="relative h-[375px] overflow-hidden font-['Roboto']">
      <MapArt />
      <div className="absolute top-3 left-[13px] flex h-[115px] w-[376px] justify-between rounded-[2px] bg-white py-3 pr-[23px] pl-[15px] shadow-[0_1px_4px_rgba(0,0,0,0.3)]">
        <div>
          <p className="text-[18px] leading-[22px] text-black">Istiqlal St</p>
          <p className="mt-2 text-[15px] leading-4 text-[#5b5b5b]">Amman</p>
          <a href="#" className="mt-[25px] block text-[15px] leading-[22px] text-[#1a73e8]">View larger map</a>
        </div>
        <a href="#" className="flex flex-col items-center text-[15px] text-[#1a73e8]">
          <svg viewBox="0 0 26 26" className="mt-[3px] size-[26px]" aria-hidden="true">
            <path d="M2 4l3-2 8 9-2 6z" fill="#b9cffb" />
            <path d="M9 25V16c0-3 1-5 4-7l3-2-3-4h11v11l-4-3-3 2c-2 2-3 3-3 5v7z" fill="#5b8df6" />
          </svg>
          <span className="mt-[3px]">Directions</span>
        </a>
      </div>
      <button type="button" aria-label="Show satellite imagery" className="absolute bottom-4 left-[13px] size-[52px] rounded-[3px] border-2 border-white shadow-[0_1px_4px_rgba(0,0,0,0.3)]">
        <SatelliteThumb />
      </button>
      <div className="absolute right-3 bottom-[30px] flex h-[101px] w-[50px] flex-col rounded-[2px] bg-white px-[7px] text-[#666666] shadow-[0_1px_4px_rgba(0,0,0,0.3)]">
        <button type="button" aria-label="Zoom in" className="flex flex-1 items-center justify-center border-b border-[#e6e6e6]">
          <svg viewBox="0 0 22 22" className="size-[22px]" aria-hidden="true">
            <path d="M8.500 0h5v8.500H22v5h-8.500V22h-5v-8.500H0v-5h8.500z" fill="currentColor" />
          </svg>
        </button>
        <button type="button" aria-label="Zoom out" className="flex flex-1 items-center justify-center">
          <svg viewBox="0 0 22 22" className="size-[22px]" aria-hidden="true">
            <path d="M0 8.500h22v5H0z" fill="currentColor" />
          </svg>
        </button>
      </div>
      <div className="absolute right-0 bottom-0 flex gap-px text-[12px] leading-[17px] text-black">
        <button type="button" className="bg-[#f5f5f5]/80 px-[9px]">Keyboard shortcuts</button>
        <span className="bg-[#f5f5f5]/80 px-[9px]">Map data ©2021 Mapa GISrael</span>
        <a href="#" className="bg-[#f5f5f5]/80 px-[9px]">Terms of Use</a>
        <a href="#" className="bg-[#f5f5f5]/80 px-[9px]">Report a map error</a>
      </div>
    </section>
  );
}

/* ---------- footer ---------- */

function Footer() {
  return (
    <footer className="h-[327px] border-b-2 border-[#1f1b27] bg-[#27232f] pt-[100px] text-[#b0aeb4]">
      <div className="mx-auto max-w-[1500px]">
        <div className="flex h-[60px] items-center justify-between">
          <p className="pb-1 text-[30px] font-light text-[#5a5b52]">Cosmatics</p>
          <div className="flex items-center">
            <nav className="flex items-center gap-10 pt-0.5 text-[17px]">
              {pages.map((p) => (
                <a key={p} href="#" className={p === "Contact" ? "text-white" : undefined}>
                  {p}
                </a>
              ))}
            </nav>
            <SelectBox name="Select Language" option="Select Language" className="ml-2 w-[247px]" />
          </div>
        </div>
        <div className="mt-[82px] flex items-center justify-between">
          <p className="text-[17px] leading-7">© 2021 Ababneh. Powered by Ababneh.</p>
          <div className="flex gap-[30px] pt-2">
            <a href="#" aria-label="Instagram"><FaInstagram className="size-[22px]" /></a>
            <a href="#" aria-label="Facebook"><FaFacebook className="size-[22px]" /></a>
            <a href="#" aria-label="Twitter"><FaTwitter className="size-[22px]" /></a>
          </div>
        </div>
      </div>
    </footer>
  );
}

export default function App() {
  return (
    <div className="bg-white font-['Inter'] text-[#5a5b52]">
      <AdminBar />
      <Header />
      <main>
        <section className="mx-auto flex max-w-[1500px] pt-[100px] pb-[120px]">
          <ContactDetails />
          <ContactForm />
        </section>
        <MapSection />
      </main>
      <Footer />
    </div>
  );
}
